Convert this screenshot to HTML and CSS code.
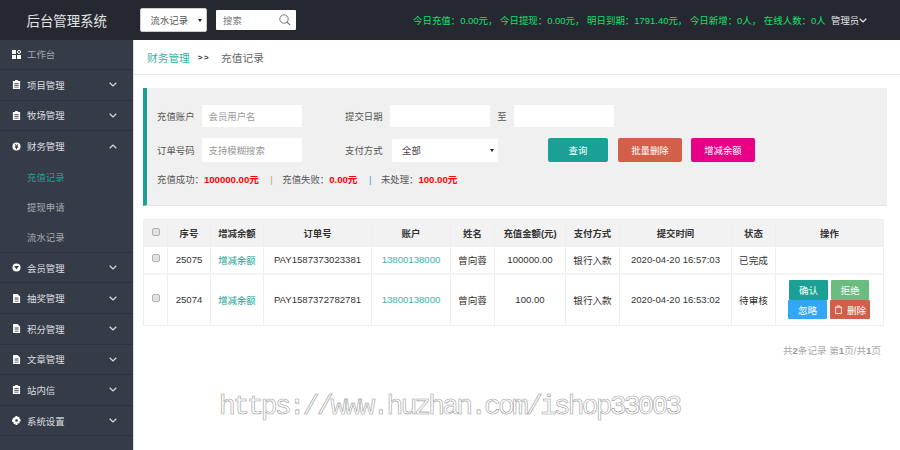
FILE: index.html
```html
<!DOCTYPE html>
<html lang="zh">
<head>
<meta charset="utf-8">
<title>后台管理系统</title>
<link rel="stylesheet" href="styles.css">
</head>
<body>
<svg class="defs" width="0" height="0">
  <symbol id="i-dash" viewBox="0 0 10 10"><path d="M0 0h4.400v4.400H0zM0 5.600h4.400V10H0zM5.600 5.600H10V10H5.600z"/><circle cx="7.800" cy="2.200" r="1.700" fill="none" stroke="#fff" stroke-width="1.100"/></symbol>
  <symbol id="i-clip" viewBox="0 0 10 10"><path d="M1 1h2.500V0h3v1H9v9H1zM2.600 3.400v.9h4.800v-.9zM2.600 5.400v.9h4.800v-.9zM2.600 7.400v.9h4.800v-.9z" fill-rule="evenodd"/></symbol>
  <symbol id="i-yen" viewBox="0 0 10 10"><path d="M5 .5a4.500 4.500 0 1 0 0 9 4.500 4.500 0 0 0 0-9zM3 2.400h1.100L5 4l.9-1.600H7L5.900 4.500h.9v.8H5.500v.6h1.300v.8H5.500V8h-1V6.700H3.200v-.8h1.300v-.6H3.200v-.8h.9z" fill-rule="evenodd"/></symbol>
  <symbol id="i-vip" viewBox="0 0 10 10"><path d="M5 .5a4.500 4.500 0 1 0 0 9 4.500 4.500 0 0 0 0-9zM2.400 3.200h5.200L5 7.200z" fill-rule="evenodd"/></symbol>
  <symbol id="i-file" viewBox="0 0 10 10"><path d="M1.200 0h5L9 2.800V10H1.200zM3 4v.9h4.200V4zM3 6v.9h4.200V6zM3 8v.7h4.200V8z" fill-rule="evenodd"/></symbol>
  <symbol id="i-gear" viewBox="0 0 10 10"><path d="M4 0h2l.3 1.400 1-.5 1.400 1.400-.6 1 1.400.4v2l-1.400.4.6 1-1.400 1.400-1-.6L6 10H4l-.3-1.400-1 .6-1.400-1.400.6-1L0 6.300V4l1.400-.3-.6-1 1.400-1.400 1 .5zM5 3.500a1.500 1.500 0 1 0 0 3 1.500 1.500 0 0 0 0-3z" fill-rule="evenodd"/></symbol>
  <symbol id="i-down" viewBox="0 0 8 5"><path d="M.7.8 4 4 7.300.8" fill="none" stroke="currentColor" stroke-width="1.200"/></symbol>
  <symbol id="i-up" viewBox="0 0 8 5"><path d="M.7 4.200 4 1l3.300 3.200" fill="none" stroke="currentColor" stroke-width="1.200"/></symbol>
</svg>
<header class="topbar">
  <div class="brand">后台管理系统</div>
  <div class="top-select"><span>流水记录</span><i class="caret"></i></div>
  <div class="top-search"><span>搜索</span>
    <svg class="search-ico" viewBox="0 0 12 12"><circle cx="5" cy="5" r="4.200" fill="none" stroke="#777" stroke-width="1"/><path d="M8 8l3.200 3.200" stroke="#777" stroke-width="1.100"/></svg>
  </div>
  <div class="top-stats">今日充值：0.00元， 今日提现：0.00元， 明日到期：1791.40元， 今日新增：0人， 在线人数：0人</div>
  <div class="top-user">管理员<svg class="chev-user"><use href="#i-down"/></svg></div>
</header>
<div class="layout">
  <nav class="sidebar">
    <div class="nav-row nav-first"><svg class="nav-ico"><use href="#i-dash"/></svg><span class="dim">工作台</span></div>
    <div class="nav-row"><svg class="nav-ico"><use href="#i-clip"/></svg><span>项目管理</span><svg class="chev"><use href="#i-down"/></svg></div>
    <div class="nav-row"><svg class="nav-ico"><use href="#i-clip"/></svg><span>牧场管理</span><svg class="chev"><use href="#i-down"/></svg></div>
    <div class="nav-group">
      <div class="nav-row nav-open"><svg class="nav-ico"><use href="#i-yen"/></svg><span>财务管理</span><svg class="chev"><use href="#i-up"/></svg></div>
      <div class="nav-sub nav-active">充值记录</div>
      <div class="nav-sub">提现申请</div>
      <div class="nav-sub">流水记录</div>
    </div>
    <div class="nav-row"><svg class="nav-ico"><use href="#i-vip"/></svg><span>会员管理</span><svg class="chev"><use href="#i-down"/></svg></div>
    <div class="nav-row"><svg class="nav-ico"><use href="#i-file"/></svg><span>抽奖管理</span><svg class="chev"><use href="#i-down"/></svg></div>
    <div class="nav-row"><svg class="nav-ico"><use href="#i-file"/></svg><span>积分管理</span><svg class="chev"><use href="#i-down"/></svg></div>
    <div class="nav-row"><svg class="nav-ico"><use href="#i-file"/></svg><span>文章管理</span><svg class="chev"><use href="#i-down"/></svg></div>
    <div class="nav-row"><svg class="nav-ico"><use href="#i-clip"/></svg><span>站内信</span><svg class="chev"><use href="#i-down"/></svg></div>
    <div class="nav-row"><svg class="nav-ico"><use href="#i-gear"/></svg><span>系统设置</span><svg class="chev"><use href="#i-down"/></svg></div>
  </nav>
  <main class="content">
    <div class="crumbs"><a class="crumb-link">财务管理</a><b class="crumb-sep">&gt;&gt;</b><span class="crumb-cur">充值记录</span></div>
    <section class="filter">
      <div class="f-row f-row1">
        <label class="f-label">充值账户</label>
        <div class="f-input f-w100 ph">会员用户名</div>
        <label class="f-label f-label2">提交日期</label>
        <div class="f-input f-w100"></div>
        <span class="f-to">至</span>
        <div class="f-input f-w100"></div>
      </div>
      <div class="f-row f-row2">
        <label class="f-label">订单号码</label>
        <div class="f-input f-w100 f-tall ph">支持模糊搜索</div>
        <label class="f-label f-label2b">支付方式</label>
        <div class="f-select"><span>全部</span><i class="caret"></i></div>
        <button class="btn btn-teal btn-query">查询</button>
        <button class="btn btn-red btn-batch">批量删除</button>
        <button class="btn btn-pink btn-adjust">增减余额</button>
      </div>
      <div class="f-stats">
        充值成功：<b class="red">100000.00元</b><i class="bar bar-o">|</i>充值失败：<b class="red">0.00元</b><i class="bar bar-b">|</i>未处理：<b class="red">100.00元</b>
      </div>
    </section>
    <table class="grid">
      <colgroup>
        <col class="c1"><col class="c2"><col class="c3"><col class="c4"><col class="c5"><col class="c6"><col class="c7"><col class="c8"><col class="c9"><col class="c10"><col class="c11">
      </colgroup>
      <thead>
        <tr><th><i class="chk"></i></th><th>序号</th><th>增减余额</th><th>订单号</th><th>账户</th><th>姓名</th><th>充值金额(元)</th><th>支付方式</th><th>提交时间</th><th>状态</th><th>操作</th></tr>
      </thead>
      <tbody>
        <tr class="r1"><td><i class="chk"></i></td><td>25075</td><td class="teal">增减余额</td><td>PAY1587373023381</td><td class="teal2">13800138000</td><td>曾向蓉</td><td>100000.00</td><td>银行入款</td><td>2020-04-20 16:57:03</td><td>已完成</td><td></td></tr>
        <tr class="r2"><td><i class="chk"></i></td><td>25074</td><td class="teal">增减余额</td><td>PAY1587372782781</td><td class="teal2">13800138000</td><td>曾向蓉</td><td>100.00</td><td>银行入款</td><td>2020-04-20 16:53:02</td><td>待审核</td>
          <td class="ops">
            <div class="ops-row"><button class="mini m-teal">确认</button><button class="mini m-green">拒绝</button></div>
            <div class="ops-row"><button class="mini m-blue">忽略</button><button class="mini m-red"><svg class="trash" viewBox="0 0 10 10"><path d="M1 2.500h8M3.500 2.500V1h3v1.500M1.800 2.500v7h6.400v-7" fill="none" stroke="#fff" stroke-width=".9"/></svg>删除</button></div>
          </td></tr>
      </tbody>
    </table>
    <div class="pager">共<b>2</b>条记录 第<b>1</b>页/共<b>1</b>页</div>
  </main>
</div>
<div class="watermark">https://www.huzhan.com/ishop33003</div>
</body>
</html>
```
FILE: styles.css
```css
* { box-sizing: border-box; }
html, body { margin: 0; padding: 0; }
body {
  width: 900px; height: 450px; overflow: hidden; background: #fff; position: relative;
  font-family: "Liberation Sans", "Noto Sans CJK SC", sans-serif;
  font-size: 9.600px; color: #555;
}
.defs { position: absolute; }
.topbar { height: 40px; background: #252831; display: flex; align-items: center; }
.brand { width: 140px; padding-left: 26.500px; font-size: 13.400px; color: #e2e2e2; white-space: nowrap; }
.top-select { width: 67px; height: 24px; background: #fff; border-radius: 2px; border: 1px solid #ccc; display: flex; align-items: center; justify-content: space-between; padding: 0 4px 0 9.500px; color: #555; font-size: 9.400px; }
.caret { width: 0; height: 0; border: 2.500px solid transparent; border-top: 3.500px solid #222; border-bottom: 0; }
.top-search { width: 80px; height: 20px; margin-left: 9px; background: #fff; border-radius: 1px; display: flex; align-items: center; justify-content: space-between; padding: 0 5.500px 0 7px; color: #777; font-size: 9.400px; }
.search-ico { width: 12px; height: 12px; }
.top-stats { margin-left: 117px; width: 418px; font-size: 9.450px; color: #10e36a; white-space: nowrap; }
.top-user { color: #e6e6e6; display: flex; align-items: center; white-space: nowrap; font-size: 9.400px; }
.chev-user { width: 8px; height: 5px; color: #e6e6e6; }

.layout { display: flex; height: 410px; }
.sidebar { width: 134px; flex: none; background: #363c47; border-right: 1px solid #ddd; color: #dcdee1; font-size: 9.400px; }
.nav-row { height: 30.600px; display: flex; align-items: center; padding-left: 12px; border-bottom: 1px solid #2d323c; white-space: nowrap; }
.nav-first { height: 30px; padding-bottom: 1px; }
.nav-open { border-bottom: 0; }
.nav-ico { width: 9px; height: 9px; fill: #fff; margin-right: 6px; flex: none; }
.dim { color: #a2a6ad; }
.chev { width: 8px; height: 5px; color: #ddd; margin-left: auto; margin-right: 16.500px; }
.nav-group { border-bottom: 1px solid #2d323c; }
.nav-sub { height: 30px; display: flex; align-items: center; padding-left: 27px; color: #a6aab1; }
.nav-active { color: #1aa094; }

.content { flex: 1; min-width: 0; }
.crumbs { height: 35px; border-bottom: 1px solid #e6e6e6; display: flex; align-items: center; padding-left: 13px; font-size: 10.700px; color: #666; }
.crumb-link { color: #35b0a1; }
.crumb-sep { font-size: 8px; color: #333; margin: 0 11px 0 8px; letter-spacing: 1.500px; }
.filter { width: 744px; height: 118px; margin: 13px 0 0 9px; background: #f0f0f0; border-left: 4px solid #1aa094; border-bottom: 1px solid #e4e4e4; padding: 17px 0 0 10px; font-size: 9.400px; }
.f-row { display: flex; align-items: center; }
.f-row1 { height: 22px; }
.f-row2 { height: 24px; margin-top: 11px; }
.f-label { width: 45px; flex: none; white-space: nowrap; color: #555; }
.f-input { height: 22px; background: #fff; border-radius: 1px; display: flex; align-items: center; padding-left: 6.500px; flex: none; }
.f-tall { height: 24px; }
.f-w100 { width: 100px; }
.ph { color: #999; }
.f-label2 { margin-left: 43px; }
.f-label2b { margin-left: 43px; width: 47px; }
.f-to { width: 24px; flex: none; text-align: center; color: #555; }
.f-select { width: 106px; height: 23px; background: #fff; border-radius: 1px; display: flex; align-items: center; justify-content: space-between; padding: 0 4px 0 10px; color: #444; flex: none; }
.btn { height: 24px; border: 0; border-radius: 2px; color: #fff; font: inherit; padding: 0; flex: none; }
.btn-teal { background: #1aa094; }
.btn-red { background: #d25f4a; }
.btn-pink { background: #e60086; }
.btn-query { width: 60px; margin-left: 50px; }
.btn-batch { width: 64px; margin-left: 10px; }
.btn-adjust { width: 64px; margin-left: 9px; }
.f-stats { margin-top: 10px; white-space: nowrap; color: #555; }
.red { color: #f00; font-weight: 700; font-size: 9.600px; }
.bar { font-style: normal; margin: 0 9.500px 0 11.500px; }
.bar-o { color: #b9a47c; }
.bar-b { color: #3a9ad9; }

.grid { width: 740px; margin: 13px 0 0 9px; border-collapse: collapse; table-layout: fixed; color: #333; }
.c1 { width: 24px; } .c2 { width: 43px; } .c3 { width: 53px; } .c4 { width: 108px; } .c5 { width: 79px; } .c6 { width: 44px; }
.c7 { width: 71px; } .c8 { width: 54px; } .c9 { width: 112px; } .c10 { width: 44px; } .c11 { width: 108px; }
.grid th, .grid td { border: 1px solid #eee; text-align: center; padding: 0; font-weight: 400; }
.grid th { height: 27px; background: #f2f2f2; font-weight: 700; color: #333; font-size: 9.400px; }
.r1 td { height: 27px; border-bottom: 2px solid #f5f5f5; }
.r2 td { height: 52px; }
.chk { display: inline-block; width: 8px; height: 8px; background: #e2e2e2; border: 1px solid #b0b0b0; border-radius: 2px; vertical-align: 1px; }
.teal { color: #1aa094; font-size: 9.400px; }
.teal2 { color: #3cb5a8; }
.grid td.ops { padding: 0 1px 0 0; }
.ops-row { display: flex; justify-content: center; }
.mini { height: 19.500px; border: 0; border-radius: 1px; color: #fff; font: inherit; padding: 0; display: flex; align-items: center; justify-content: center; }
.m-teal { width: 39px; background: #1aa094; margin-right: 3px; }
.m-green { width: 38px; background: #6cbc82; }
.m-blue { width: 39px; background: #31a7f5; margin-right: 3px; }
.m-red { width: 40px; background: #d25f4a; }
.trash { width: 9px; height: 9px; margin-right: 4px; }
.pager { width: 738px; margin: 17px 0 0 9px; text-align: right; color: #aaa; }
.pager b { color: #999; }
.watermark { position: absolute; left: 219px; top: 391px; font-family: "Liberation Mono", monospace; font-size: 28px; letter-spacing: -2.850px; color: #fff; -webkit-text-stroke: .6px #999; opacity: .95; white-space: nowrap; }
```
